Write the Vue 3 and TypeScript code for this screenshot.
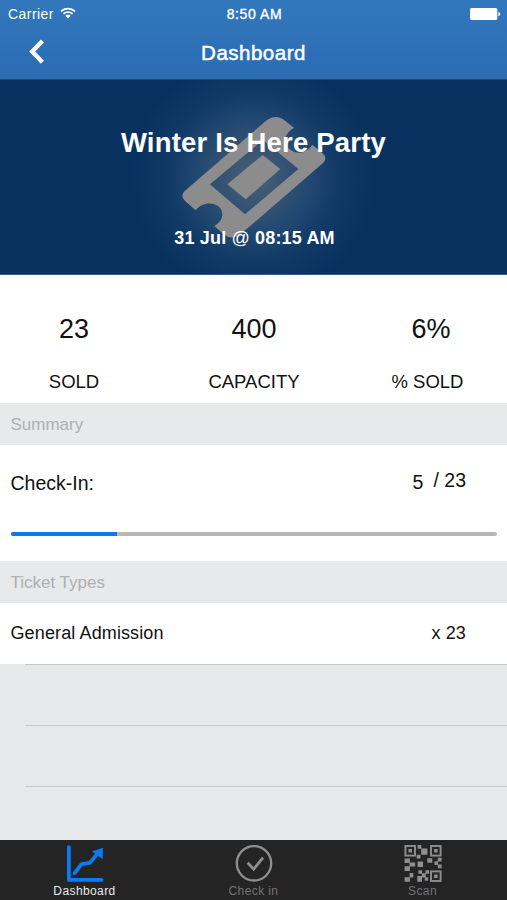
<script setup lang="ts">
interface Stat {
  key: string
  value: string
  label: string
}

interface TicketType {
  name: string
  count: number
}

const stats: Stat[] = [
  { key: 'sold', value: '23', label: 'SOLD' },
  { key: 'capacity', value: '400', label: 'CAPACITY' },
  { key: 'percent', value: '6%', label: '% SOLD' },
]

const checkedIn = 5
const total = 23
const progress = `${(checkedIn / total) * 100}%`

const ticketTypes: TicketType[] = [{ name: 'General Admission', count: 23 }]
</script>

<template>
  <div class="screen">
    <header class="top">
      <div class="status">
        <div class="carrier">
          <span class="carrier-name">Carrier</span>
          <svg class="wifi" width="16" height="12" viewBox="0 0 16 12">
            <path d="M1 4.4a10 10 0 0 1 14 0M3.4 6.9a6.5 6.5 0 0 1 9.2 0" fill="none" stroke="#fff" stroke-width="1.7" />
            <path d="M8 11.4 5.4 8.8a3.7 3.7 0 0 1 5.2 0z" fill="#fff" />
          </svg>
        </div>
        <span class="time">8:50 AM</span>
        <svg class="battery" width="31" height="12" viewBox="0 0 31 12">
          <rect width="27.3" height="12" rx="1.5" fill="#fff" />
          <path d="M28.3 3.8c2.7.8 2.7 3.6 0 4.4z" fill="#fff" />
        </svg>
      </div>
      <nav class="nav">
        <svg class="back" width="16" height="26" viewBox="0 0 16 26">
          <path d="M13.4 2 3.2 12.6 13.4 23.2" fill="none" stroke="#fff" stroke-width="4.3" />
        </svg>
        <h1 class="title">Dashboard</h1>
      </nav>
    </header>

    <section class="hero">
      <svg class="ticket" width="150" height="126" viewBox="240 75 450 378">
        <path
          fill="#8c8c8c"
          fill-rule="evenodd"
          d="M500 91Q528 70 555 92L582 113C550 132 549 162 569 178C591 196 620 189 637 164L668 190Q684 204 669 219L425 430Q397 454 370 432L343 408C371 393 375 362 353 347C331 334 302 341 287 361L256 334Q238 318 255 302ZM489 150L330 283L435 373L595 237Z"
        />
        <path fill="#8c8c8c" d="M488 195 541 237 437 328 382 283z" />
      </svg>
      <h2 class="event">Winter Is Here Party</h2>
      <p class="date">31 Jul <span class="at">@</span> 08:15 AM</p>
    </section>

    <section class="stats">
      <div v-for="stat in stats" :key="stat.key" class="stat" :class="stat.key">
        <span class="value">{{ stat.value }}</span>
        <span class="label">{{ stat.label }}</span>
      </div>
    </section>

    <h3 class="section">Summary</h3>
    <section class="checkin">
      <div class="checkin-row">
        <span class="checkin-label">Check-In:</span>
        <span class="checked">{{ checkedIn }}</span>
        <span class="total">/ {{ total }}</span>
      </div>
      <div class="track"><div class="fill" :style="{ width: progress }"></div></div>
    </section>

    <h3 class="section">Ticket Types</h3>
    <div v-for="type in ticketTypes" :key="type.name" class="type-row">
      <span class="type-name">{{ type.name }}</span>
      <span class="type-count">x {{ type.count }}</span>
    </div>
    <div class="empty">
      <div v-for="n in 3" :key="n" class="empty-row"></div>
    </div>

    <footer class="tabs">
      <div class="tab active">
        <svg width="40" height="40" viewBox="0 0 40 40">
          <g fill="none" stroke="#0b7bf4" stroke-width="3.8" stroke-linecap="round" stroke-linejoin="round">
            <path d="M3.9 4.2V36.900H36.600" />
            <path d="M9.700 30.200 16.500 21.200 24.800 19.900 33.500 9.500" />
          </g>
          <path d="M27 8.500 38 4.700 37.600 16z" fill="#0b7bf4" />
        </svg>
        <span>Dashboard</span>
      </div>
      <div class="tab">
        <svg width="40" height="40" viewBox="0 0 40 40">
          <circle cx="20" cy="20.300" r="17.200" fill="none" stroke="#8f8f8f" stroke-width="2.300" />
          <path d="M13.600 19.800 19.700 26.200 29 14.600" fill="none" stroke="#8f8f8f" stroke-width="2.800" />
        </svg>
        <span>Check in</span>
      </div>
      <div class="tab">
        <svg width="40" height="40" viewBox="0 0 40 40">
          <g fill="none" stroke="#8f8f8f" stroke-width="1.9">
            <rect x="2.400" y="3" width="9.600" height="9.600" />
            <rect x="28" y="3" width="9.600" height="9.600" />
            <rect x="28" y="28.400" width="9.600" height="9.600" />
          </g>
          <g fill="#8f8f8f">
            <path d="M5.500 6.100h3.500v3.500H5.500zM31.100 6.100h3.500v3.500h-3.500zM31.100 31.500h3.500v3.500h-3.500z" />
            <path d="M14.600 2h3.700v3.700h-3.700zM18.200 5.500h6.200v6.300h-6.200zM13.700 11.700h3.800v3.800h-3.800zM24.300 15.200h5v4.600h-5zM34.800 14.800h3.800v3.800h-3.800zM31.500 18.200h3.500v3.700h-3.500zM34.800 21.500h3.800v3.800h-3.800z" />
            <path d="M1.600 15.500h5.300v4.500H1.600zM6.500 19.500h5.700v3.900H6.500zM1.600 23.300h5.300v4.700H1.600zM14.600 18.500h5.400v5.500h-5.400zM6.600 30h3.700v4.500h-3.700zM1.600 34.300h5.300v4.400H1.600z" />
            <path d="M15.400 27.200h3.700v3.500h-3.700zM22.500 27.200h3.700v3.500h-3.700zM18.800 30.300h4v4.300h-4zM14.300 33h4.700v5.700h-4.700zM21.800 34.200h3.400v3.500h-3.400z" />
          </g>
        </svg>
        <span>Scan</span>
      </div>
    </footer>
  </div>
</template>

<style>
body {
  margin: 0;
  overflow: hidden;
}
</style>

<style scoped>
.screen {
  width: 507px;
  height: 900px;
  display: flex;
  flex-direction: column;
  background: #e8e9eb;
  color: #111;
  font-family: "Liberation Sans", sans-serif;
}

h1,
h2,
h3,
p {
  margin: 0;
}

span,
h1,
h2,
p {
  white-space: nowrap;
}

.top {
  height: 79px;
  flex: none;
  background: linear-gradient(#3277bc, #2b6cb3);
  color: #fff;
}

.status {
  height: 27px;
  display: grid;
  grid-template-columns: 1fr auto 1fr;
  align-items: center;
  padding: 0 6px 0 8px;
  box-sizing: border-box;
  font-size: 14px;
  line-height: 28px;
}

.carrier {
  display: flex;
  align-items: center;
  gap: 6px;
}

.carrier-name {
  letter-spacing: 0.45px;
}

.wifi {
  margin-bottom: 2px;
}

.time {
  letter-spacing: 0.6px;
  -webkit-text-stroke: 0.35px #fff;
}

.battery {
  justify-self: end;
}

.nav {
  height: 52px;
  display: grid;
  grid-template-columns: 1fr auto 1fr;
  align-items: center;
}

.back {
  margin: 0 0 3px 29px;
}

.title {
  font-size: 20.5px;
  font-weight: 400;
  letter-spacing: 0.5px;
  line-height: 50px;
  -webkit-text-stroke: 0.45px #fff;
}

.hero {
  height: 196px;
  flex: none;
  display: grid;
  grid-template-rows: 126px 70px;
  justify-items: center;
  align-items: center;
  box-sizing: border-box;
  border-top: 1px solid #174579;
  border-bottom: 1px solid #315b88;
  background: radial-gradient(circle at 50% 50%, #4a6178 0, #385473 28px, #1f4770 60px, #123a67 84px, #08315f 122px);
  color: #fff;
}

.ticket {
  grid-area: 1 / 1 / 3 / 2;
  align-self: start;
  margin: 35px 0 0 2px;
}

.event {
  grid-area: 1 / 1;
  font-size: 27.5px;
  letter-spacing: 0.2px;
  line-height: 30px;
}

.date {
  grid-area: 2 / 1;
  align-self: start;
  margin: 21px 0 0 2px;
  font-size: 18px;
  font-weight: 700;
  letter-spacing: 0.16px;
  line-height: 22px;
}

.at {
  font-weight: 400;
}

.stats {
  height: 128px;
  flex: none;
  display: grid;
  grid-template-columns: 148px 212px 147px;
  background: #fff;
}

.stat {
  display: flex;
  flex-direction: column;
  align-items: center;
  padding-top: 38px;
}

.value {
  font-size: 27px;
  line-height: 32px;
}

.label {
  margin-top: 26px;
  font-size: 18.5px;
  line-height: 22px;
}

.percent .value {
  margin-right: 5px;
}

.percent .label {
  margin-right: 12px;
}

.section {
  height: 42px;
  flex: none;
  padding-left: 10.5px;
  color: #aeb0b1;
  font-size: 17px;
  font-weight: 400;
  line-height: 43px;
}

.checkin {
  height: 116px;
  flex: none;
  background: #fff;
}

.checkin-row {
  height: 86px;
  display: flex;
  padding: 0 41px 0 10.5px;
  font-size: 19.5px;
  line-height: 76px;
}

.checked {
  margin-left: auto;
  line-height: 74px;
}

.total {
  margin-left: 10px;
  line-height: 71px;
}

.track {
  height: 4px;
  margin: 1px 10px 0 11px;
  border-radius: 2px;
  background: #b7b7b7;
  overflow: hidden;
}

.fill {
  height: 100%;
  background: #0d78f2;
}

.type-row {
  height: 61px;
  flex: none;
  display: flex;
  justify-content: space-between;
  padding: 0 41px 0 10.5px;
  background: #fff;
  font-size: 18px;
  letter-spacing: 0.12px;
  line-height: 61px;
}

.empty {
  flex: 1;
  min-height: 0;
  overflow: hidden;
}

.empty-row {
  height: 60px;
  margin-left: 25px;
  border-top: 1px solid #c8c9cb;
}

.tabs {
  height: 60px;
  flex: none;
  display: grid;
  grid-template-columns: repeat(3, 1fr);
  background: #242424;
}

.tab {
  display: flex;
  flex-direction: column;
  align-items: center;
  padding-top: 3px;
  color: #737373;
  font-size: 12px;
  line-height: 15px;
}

.tab span {
  margin-top: 1px;
  letter-spacing: 0.4px;
}

.active {
  color: #e9e9e9;
}
</style>
